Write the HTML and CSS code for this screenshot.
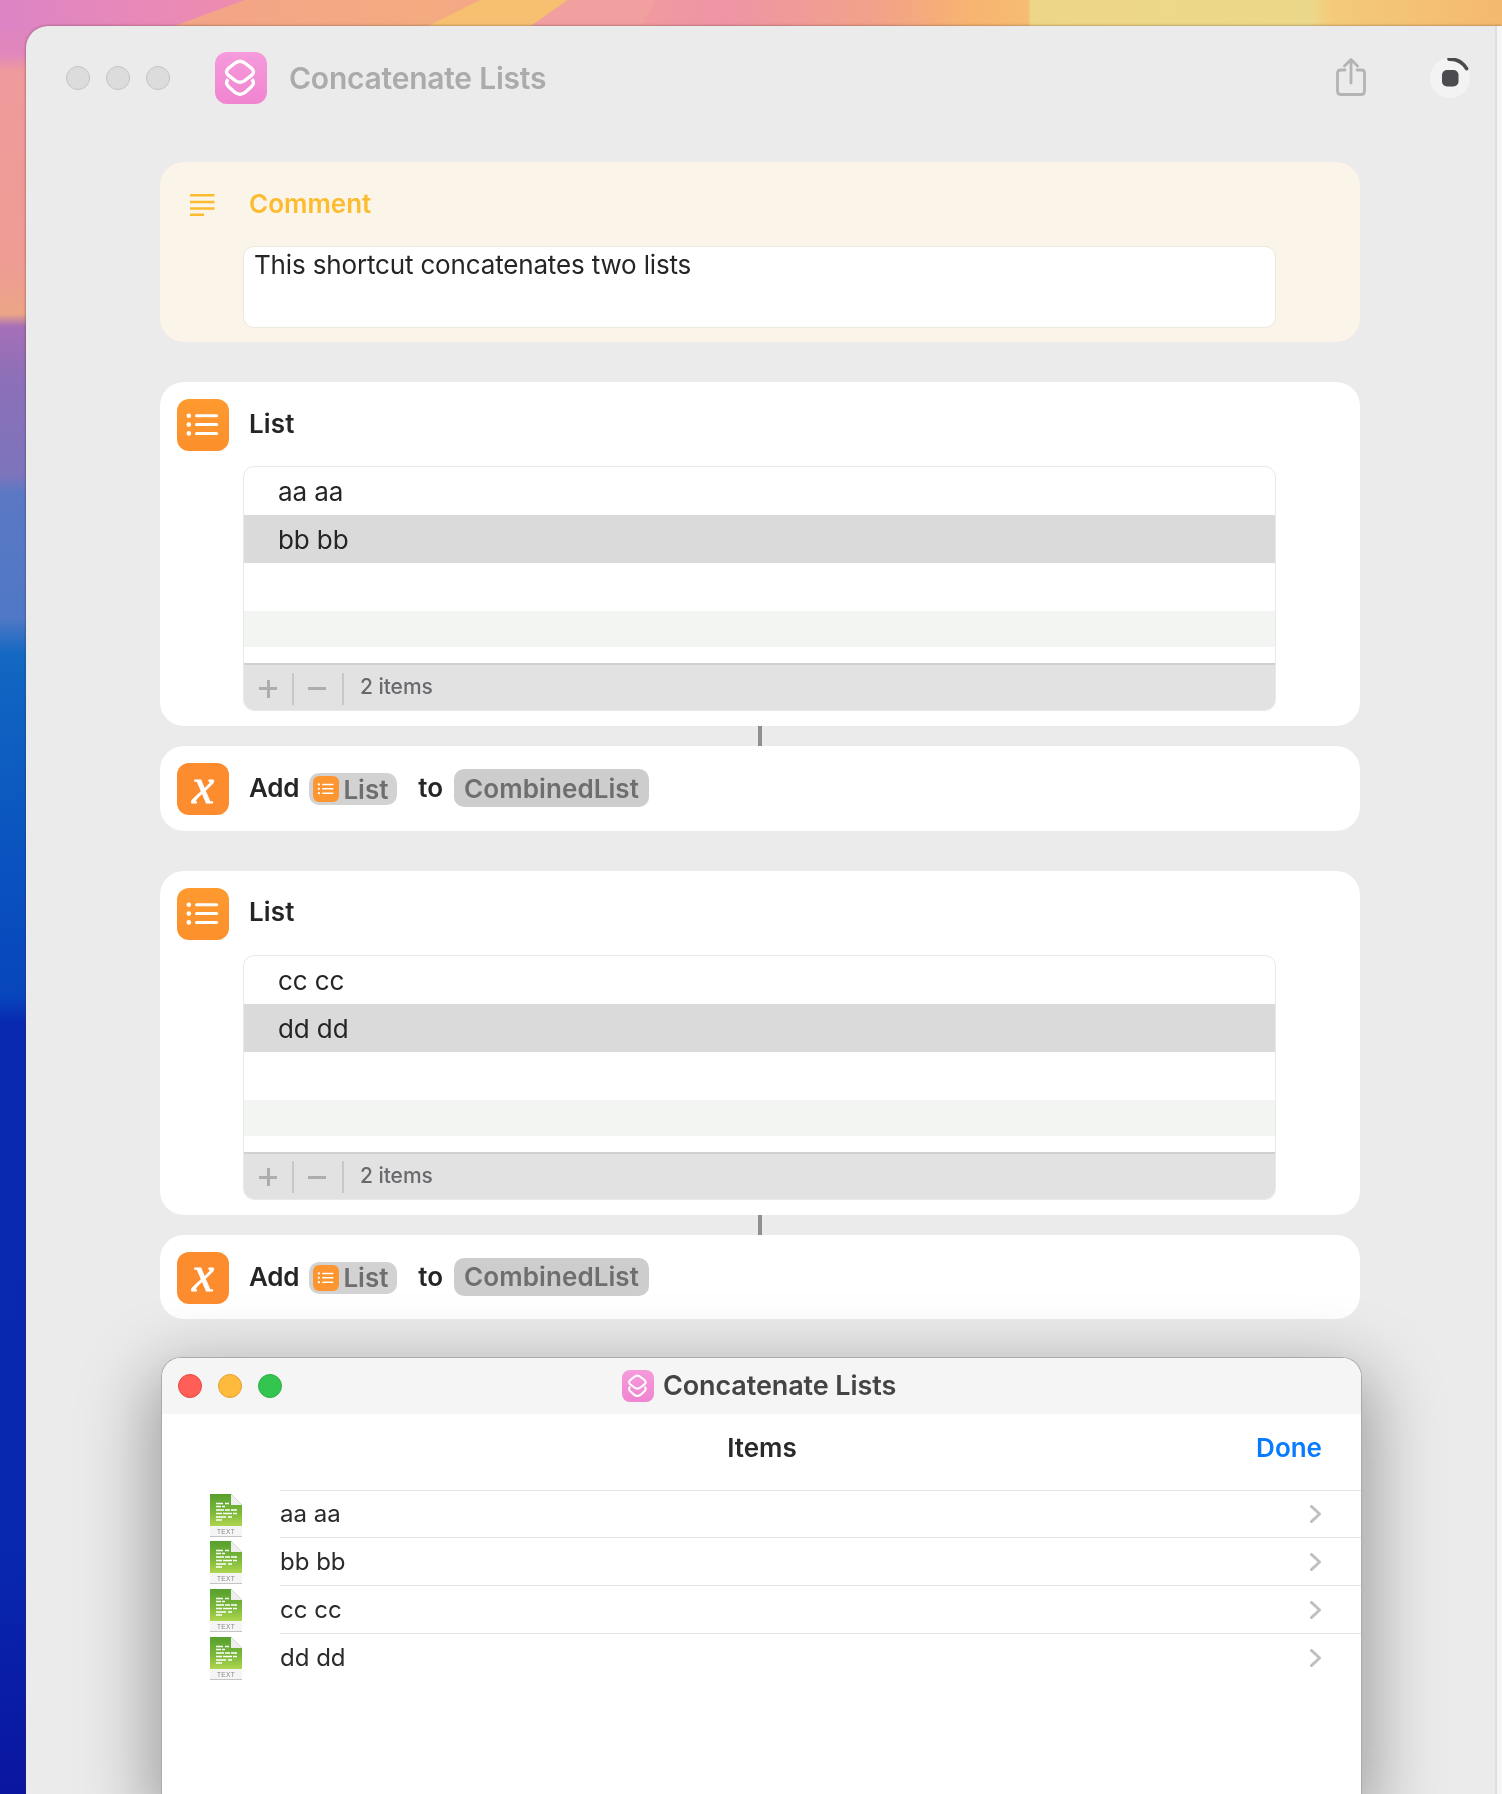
FILE: index.html
```html
<!DOCTYPE html>
<html lang="en">
<head>
<meta charset="utf-8">
<title>Concatenate Lists</title>
<link rel="stylesheet" href="styles.css">
</head>
<body>
<svg class="defs" width="0" height="0" aria-hidden="true">
  <defs>
    <symbol id="shortcuts" viewBox="0 0 52 52">
      <g transform="translate(-1 0)">
        <path d="M20.5 11.5Q26 6.8 31.5 11.5L37.500 16.2Q41.500 19.8 37.500 23.4L31.5 28Q26 32.6 20.5 28L14.500 23.4Q10.500 19.8 14.500 16.2Z" fill="none" stroke="#fff" stroke-width="3.4"/>
        <path d="M14.2 27.2Q10.6 30.6 14.4 34.4L20.5 40Q26 44.6 31.5 40L37.6 34.4Q41.4 30.6 37.8 27.2" fill="none" stroke="#fff" stroke-width="3.4"/>
      </g>
    </symbol>
    <symbol id="list" viewBox="0 0 52 52">
      <g fill="#fff">
        <circle cx="11.8" cy="16.8" r="2.3"/><circle cx="11.8" cy="25.6" r="2.3"/><circle cx="11.8" cy="34.4" r="2.3"/>
      </g>
      <g stroke="#fff" stroke-width="3" stroke-linecap="round">
        <path d="M19.5 16.8H39.6"/><path d="M19.5 25.6H39.6"/><path d="M19.5 34.4H39.6"/>
      </g>
    </symbol>
    <linearGradient id="filegreen" x1="0" y1="0" x2="0" y2="1">
      <stop offset="0" stop-color="#55a02e"/><stop offset=".6" stop-color="#7dba3a"/><stop offset="1" stop-color="#b0d650"/>
    </linearGradient>
    <symbol id="textfile" viewBox="0 0 32 43">
      <path d="M0 0H21L32 11V32H0Z" fill="url(#filegreen)"/>
      <path d="M21 0L32 11H21Z" fill="#eeeeee"/>
      <rect x="0" y="32" width="32" height="10" fill="#f5f5f5"/>
      <rect x="0" y="42" width="32" height="1" fill="#c4c4c4"/>
      <g stroke="#fff" stroke-width="1.3">
        <path d="M6 9.500H13M15 9.500H19"/><path d="M6 12.500H11M12 12.500H15"/><path d="M6 16H14M15 16H20M21 16H27"/><path d="M6 19.500H12M13 19.500H22M23 19.500H27"/><path d="M6 23H16M18 23H22"/><path d="M6 26H12"/>
      </g>
      <text x="16" y="39.800" text-anchor="middle" font-family="Liberation Sans, sans-serif" font-size="6.500" letter-spacing=".4" fill="#8a8a8a">TEXT</text>
    </symbol>
    <symbol id="chevron" viewBox="0 0 11 18">
      <path d="M1.400 1.400L9.600 9L1.400 16.600" fill="none" stroke="#c0c0c0" stroke-width="2.800" stroke-linecap="round" stroke-linejoin="round"/>
    </symbol>
  </defs>
</svg>

<div class="desktop">
  <svg class="wallpaper" viewBox="0 0 1502 1794" preserveAspectRatio="none" aria-hidden="true">
    <defs>
      <linearGradient id="wallside" x1="0" y1="0" x2="0" y2="1">
        <stop offset="0" stop-color="#dd84c6"/>
        <stop offset=".03" stop-color="#e087bd"/>
        <stop offset=".04" stop-color="#ef9a9c"/>
        <stop offset=".145" stop-color="#ee9c94"/>
        <stop offset=".175" stop-color="#eca487"/>
        <stop offset=".182" stop-color="#a66fb8"/>
        <stop offset=".21" stop-color="#8d70b8"/>
        <stop offset=".265" stop-color="#7c74bc"/>
        <stop offset=".275" stop-color="#5b78c4"/>
        <stop offset=".345" stop-color="#4f78c6"/>
        <stop offset=".365" stop-color="#1268c2"/>
        <stop offset=".47" stop-color="#0a54c0"/>
        <stop offset=".555" stop-color="#0846bc"/>
        <stop offset=".57" stop-color="#0829b0"/>
        <stop offset=".86" stop-color="#0828b0"/>
        <stop offset="1" stop-color="#0a159f"/>
      </linearGradient>
      <linearGradient id="walltop" x1="0" y1="0" x2="1" y2="0">
        <stop offset="0" stop-color="#f2a08c"/>
        <stop offset=".27" stop-color="#f4ab80"/>
        <stop offset=".37" stop-color="#f3a098"/>
        <stop offset=".47" stop-color="#ee94a6"/>
        <stop offset=".58" stop-color="#f2a388"/>
        <stop offset=".64" stop-color="#f8b470"/>
        <stop offset=".678" stop-color="#f6bc74"/>
        <stop offset=".68" stop-color="#eed688"/>
        <stop offset=".87" stop-color="#ecd88a"/>
        <stop offset=".885" stop-color="#f4ca7a"/>
        <stop offset="1" stop-color="#f4b96e"/>
      </linearGradient>
      <linearGradient id="wallpink" x1="0" y1="0" x2="1" y2="0">
        <stop offset="0" stop-color="#dd84c6"/>
        <stop offset="1" stop-color="#ef8cae"/>
      </linearGradient>
    </defs>
    <rect width="1502" height="1794" fill="url(#wallside)"/>
    <rect x="30" width="1472" height="30" fill="url(#walltop)"/>
    <path d="M0 0H245L163 30H0Z" fill="url(#wallpink)"/>
    <path d="M420 30L480 0H568L525 30Z" fill="#f6c070"/>
    <path d="M525 30L568 0H655L640 30Z" fill="#f29fa0"/>
  </svg>

  <div class="shell">
    <main class="window">
      <header class="titlebar">
        <div class="lights">
          <span class="light light-idle"></span>
          <span class="light light-idle"></span>
          <span class="light light-idle"></span>
        </div>
        <span class="app-icon"><svg class="fill"><use href="#shortcuts"/></svg></span>
        <h1 class="app-title">Concatenate Lists</h1>
        <svg class="share" viewBox="0 0 30 38" aria-hidden="true">
          <path d="M9 12H4.500Q1.500 12 1.500 15V33Q1.500 36.500 4.500 36.500H25.500Q28.500 36.500 28.500 33V15Q28.500 12 25.500 12H21" fill="none" stroke="#b4b4b4" stroke-width="2.800" stroke-linecap="round"/>
          <path d="M15 25V2M8.500 8L15 1.600L21.500 8" fill="none" stroke="#b4b4b4" stroke-width="2.800" stroke-linecap="round" stroke-linejoin="round"/>
        </svg>
        <div class="runner">
          <svg class="fill" viewBox="0 0 40 40" aria-hidden="true">
            <path d="M19 1.200A19.500 19.500 0 0 1 36.600 10.600" fill="none" stroke="#4b4b50" stroke-width="3.600" stroke-linecap="round"/>
            <rect x="12" y="12" width="16.500" height="16.500" rx="5" fill="#4b4b50"/>
          </svg>
        </div>
      </header>

      <div class="content">
        <section class="card card-comment">
          <div class="card-head">
            <svg class="comment-icon" viewBox="0 0 25 22" aria-hidden="true">
              <path d="M0 1.300H24.500M0 8H24.500M0 14.500H24.500M0 20.800H14" stroke="#fdbb30" stroke-width="2.500"/>
            </svg>
            <h2 class="card-title title-comment">Comment</h2>
          </div>
          <div class="comment-box">This shortcut concatenates two lists</div>
        </section>

        <section class="card card-list">
          <div class="card-head">
            <span class="action-icon icon-list"><svg class="fill"><use href="#list"/></svg></span>
            <h2 class="card-title">List</h2>
          </div>
          <div class="list-box">
            <div class="list-row">aa aa</div>
            <div class="list-row row-selected">bb bb</div>
            <div class="list-row"></div>
            <div class="list-stripe"></div>
            <div class="list-foot">
              <span class="foot-btn foot-plus"></span>
              <span class="foot-btn foot-minus"></span>
              <span class="foot-count">2 items</span>
            </div>
          </div>
        </section>
        <div class="connector"></div>
        <section class="card card-add">
          <span class="action-icon icon-var"><span class="var-x">x</span></span>
          <span class="word word-add">Add</span>
          <span class="pill pill-list"><span class="mini-icon"><svg class="fill"><use href="#list"/></svg></span>List</span>
          <span class="word word-to">to</span>
          <span class="pill pill-var">CombinedList</span>
        </section>

        <section class="card card-list card-second">
          <div class="card-head">
            <span class="action-icon icon-list"><svg class="fill"><use href="#list"/></svg></span>
            <h2 class="card-title">List</h2>
          </div>
          <div class="list-box">
            <div class="list-row">cc cc</div>
            <div class="list-row row-selected">dd dd</div>
            <div class="list-row"></div>
            <div class="list-stripe"></div>
            <div class="list-foot">
              <span class="foot-btn foot-plus"></span>
              <span class="foot-btn foot-minus"></span>
              <span class="foot-count">2 items</span>
            </div>
          </div>
        </section>
        <div class="connector"></div>
        <section class="card card-add">
          <span class="action-icon icon-var"><span class="var-x">x</span></span>
          <span class="word word-add">Add</span>
          <span class="pill pill-list"><span class="mini-icon"><svg class="fill"><use href="#list"/></svg></span>List</span>
          <span class="word word-to">to</span>
          <span class="pill pill-var">CombinedList</span>
        </section>

        <section class="modal">
          <div class="modal-bar">
            <div class="lights">
              <span class="light light-red"></span>
              <span class="light light-yellow"></span>
              <span class="light light-green"></span>
            </div>
            <div class="modal-title">
              <span class="modal-icon"><svg class="fill"><use href="#shortcuts"/></svg></span>
              <span class="modal-name">Concatenate Lists</span>
            </div>
          </div>
          <div class="modal-head">
            <span class="modal-heading">Items</span>
            <span class="modal-done">Done</span>
          </div>
          <div class="item-row">
            <svg class="file-icon"><use href="#textfile"/></svg>
            <div class="item-body"><span class="item-text">aa aa</span><svg class="chev"><use href="#chevron"/></svg></div>
          </div>
          <div class="item-row">
            <svg class="file-icon"><use href="#textfile"/></svg>
            <div class="item-body"><span class="item-text">bb bb</span><svg class="chev"><use href="#chevron"/></svg></div>
          </div>
          <div class="item-row">
            <svg class="file-icon"><use href="#textfile"/></svg>
            <div class="item-body"><span class="item-text">cc cc</span><svg class="chev"><use href="#chevron"/></svg></div>
          </div>
          <div class="item-row">
            <svg class="file-icon"><use href="#textfile"/></svg>
            <div class="item-body"><span class="item-text">dd dd</span><svg class="chev"><use href="#chevron"/></svg></div>
          </div>
        </section>
      </div>
    </main>
    <div class="side-strip"></div>
  </div>
</div>
</body>
</html>
```
FILE: styles.css
```css
* { box-sizing: border-box; }
html, body { margin: 0; padding: 0; }
body { font-family: Inter, "Liberation Sans", sans-serif; color: #252528; }
h1, h2 { margin: 0; font: inherit; }

.defs { position: absolute; }
.fill { display: block; width: 100%; height: 100%; }

.desktop { position: relative; width: 1502px; height: 1794px; overflow: hidden; }
.wallpaper { position: absolute; left: 0; top: 0; width: 1502px; height: 1794px; }

.shell { position: relative; display: flex; height: 1768px; margin: 26px 0 0 26px; filter: drop-shadow(0 0 1.5px rgba(70, 40, 30, .55)); }
.window { flex: 1; min-width: 0; height: 100%; overflow: hidden; background: #ebebeb; border-top-left-radius: 22px; }
.side-strip { width: 7px; background: #f6f6f6; border-left: 2px solid #dedede; }

.titlebar { display: flex; align-items: center; height: 104px; padding: 0 25px 0 40px; }
.lights { display: flex; gap: 16px; }
.light { display: block; width: 24px; height: 24px; border-radius: 50%; }
.light-idle { background: #dcdcdc; border: 1px solid #c5c5c5; }
.light-red { background: #ff5f57; border: 1px solid #e5483f; }
.light-yellow { background: #feba3d; border: 1px solid #e3a02f; }
.light-green { background: #33c54f; border: 1px solid #2cb045; }

.app-icon { width: 52px; height: 52px; margin-left: 45px; border-radius: 12px; background: linear-gradient(#f59bdc, #f184d0); }
.app-title { flex: 1; margin-left: 22px; font-size: 30px; line-height: 36px; font-weight: 600; letter-spacing: -.23px; color: #ababab; }
.share { width: 30px; height: 38px; margin-top: -3px; }
.runner { width: 40px; height: 40px; margin-left: 64px; border-radius: 50%; background: #f3f3f3; }

.content { padding: 32px 0 0 134px; }

.card { width: 1200px; background: #fff; border-radius: 24px; }
.card-comment { height: 180px; padding: 17px 17px 15px; background: #fbf4e8; }
.card-list { height: 344px; padding: 17px 17px 15px; margin-top: 40px; }
.card-second { margin-top: 40px; }
.card-head { display: flex; align-items: center; height: 52px; }
.card-title { margin-left: 20px; font-size: 26px; line-height: 32px; font-weight: 600; letter-spacing: .15px; margin-top: -3px; }
.title-comment { color: #fdbb30; margin-left: 21px; letter-spacing: 0; }
.comment-icon { width: 25px; height: 22px; margin: 0 13.500px 0 12.500px; }

.action-icon { display: block; flex: none; width: 52px; height: 52px; border-radius: 12px; }
.icon-list { background: linear-gradient(#fe9a30, #fc902c); }
.icon-var { display: flex; align-items: center; justify-content: center; background: #fc8c2e; }
.var-x { font-family: "Liberation Serif", serif; font-style: italic; font-weight: 400; font-size: 50px; line-height: 44px; color: #fff; -webkit-text-stroke: .8px #fff; margin-top: -7px; }

.comment-box { width: 1033px; height: 82px; margin: 15px 0 0 66px; padding: 1px 10px 0; background: #fff; border: 1px solid #ece8df; border-radius: 11px; font-size: 26px; line-height: 34px; letter-spacing: -.16px; }

.list-box { width: 1033px; height: 245px; margin: 15px 0 0 66px; overflow: hidden; border: 1px solid #e9e9e9; border-radius: 11px; background: #fff; font-size: 26px; }
.list-row { height: 48px; padding-left: 34px; line-height: 49px; letter-spacing: -.1px; }
.row-selected { background: #dadada; }
.list-stripe { height: 36px; background: #f3f5f3; margin-bottom: 16px; }
.list-foot { display: flex; align-items: center; height: 49px; padding-left: 1px; background: #e2e2e2; border-top: 2px solid #d0d0d0; }
.foot-btn { position: relative; display: block; flex: none; height: 32px; border-right: 2px solid #c8c8c8; }
.foot-plus { width: 49px; }
.foot-minus { width: 50px; }
.foot-plus::before, .foot-minus::before { content: ""; position: absolute; background: #adadad; left: 14px; top: 14.500px; width: 18px; height: 3px; }
.foot-plus::after { content: ""; position: absolute; background: #adadad; left: 21.500px; top: 7px; width: 3px; height: 18px; }
.foot-count { margin: -4px 0 0 16px; font-size: 21px; font-weight: 500; letter-spacing: -.04px; color: #69696d; }

.connector { width: 4px; height: 20px; margin-left: 598px; background: #8e8e93; }

.card-add { display: flex; align-items: center; height: 84.500px; padding: 1.500px 17px 0; }
.word { font-size: 26px; font-weight: 600; margin-top: -3px; }
.word-add { margin-left: 20px; letter-spacing: -.2px; }
.word-to { margin-left: 21px; }
.pill { display: flex; align-items: center; font-size: 26px; font-weight: 600; color: #6e6e70; }
.pill-list { height: 32px; margin-left: 10px; padding: 0 9px 0 4px; background: #d2d2d2; border-radius: 10px; }
.pill-var { height: 38px; margin-left: 11px; padding: 0 10px; background: #cdcdcd; border-radius: 10px; margin-top: -2px; letter-spacing: .08px; }
.mini-icon { display: block; width: 26px; height: 26px; margin-right: 4px; background: #fd9630; border-radius: 6px; }

.modal { width: 1201px; height: 437px; margin: 38px 0 0 1px; overflow: hidden; background: #fff; border: 1px solid #a9adaa; border-bottom: 0; border-radius: 20px 20px 0 0; box-shadow: 0 24px 70px 10px rgba(0, 0, 0, .34); }
.modal-bar { display: grid; grid-template-columns: 1fr auto 1fr; align-items: center; height: 56px; padding: 0 21px 0 16px; background: #f5f5f5; }
.modal-title { display: flex; align-items: center; gap: 9px; font-size: 27px; font-weight: 600; letter-spacing: -.1px; color: #444446; }
.modal-name { margin-top: -2px; }
.modal-icon { display: block; width: 32px; height: 32px; border-radius: 8px; background: linear-gradient(#f59bdc, #f184d0); }

.modal-head { display: grid; grid-template-columns: 1fr auto 1fr; align-items: center; height: 75.500px; padding: 0 39px 0 40px; font-size: 26px; font-weight: 600; }
.modal-heading { grid-column: 2; color: #29292b; margin-top: -8px; }
.modal-done { justify-self: end; color: #0a7bff; margin-top: -8px; }

.item-row { display: flex; height: 48px; padding-left: 48px; }
.modal-head + .item-row { height: 47px; }
.file-icon { flex: none; width: 32px; height: 43px; margin: 4px 38px 0 0; }
.item-body { flex: 1; display: flex; align-items: center; justify-content: space-between; padding-right: 40px; border-top: 1px solid #e5e5e5; font-size: 24px; color: #2b2b2d; }
.chev { display: block; width: 11px; height: 18px; margin-top: 1px; }
```
